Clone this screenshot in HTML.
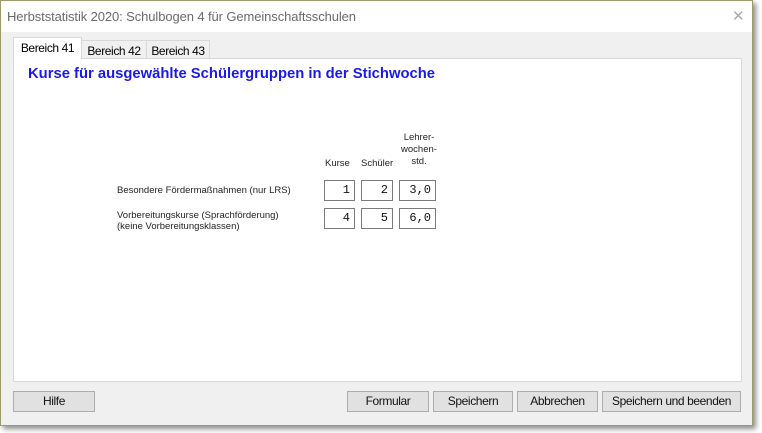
<!DOCTYPE html>
<html><head><meta charset="utf-8"><style>
body{margin:0;width:762px;height:433px;background:#fff;position:relative;overflow:hidden;font-family:"Liberation Sans",sans-serif;}
.win{position:absolute;left:0;top:0;width:753px;height:426px;background:#f0f0f0;border:1px solid #9a9a6a;box-shadow:3px 3px 5px rgba(0,0,0,.45);box-sizing:border-box;}
.title{position:absolute;left:0;top:0;right:0;height:31px;background:#fff;}
.t{position:absolute;left:6px;top:8px;font-size:13px;color:#6a6a6a;letter-spacing:-0.1px;}
.x{position:absolute;left:731px;top:6px;font-size:15px;color:#aaa;}
.abs{position:absolute;}
.tab{position:absolute;font-size:12px;color:#000;border:1px solid #d8d8d8;box-sizing:border-box;text-align:center;background:#f0f0f0;padding-top:3px;letter-spacing:-0.4px;}
.panel{position:absolute;left:12px;top:57px;width:729px;height:324px;background:#fff;border:1px solid #d8d8d8;box-sizing:border-box;}
.s{font-size:9.5px;color:#222;position:absolute;}
.in{position:absolute;height:21px;border:1px solid #7a7a7a;background:#fff;box-sizing:border-box;font-family:"Liberation Mono",monospace;font-size:12px;text-align:right;padding-right:4px;line-height:19px;color:#111;}
.btn{position:absolute;top:390px;height:21px;background:#e1e1e1;border:1px solid #adadad;box-sizing:border-box;font-size:12px;text-align:center;line-height:19px;color:#111;letter-spacing:-0.4px;}
</style></head><body>
<div class="win">
<div class="title"><div class="t">Herbststatistik 2020: Schulbogen 4 für Gemeinschaftsschulen</div><div class="x">✕</div></div>
<div class="panel"></div>
<div class="tab" style="left:80px;top:39px;width:66px;height:19px;">Bereich 42</div>
<div class="tab" style="left:145px;top:39px;width:64px;height:19px;">Bereich 43</div>
<div class="tab" style="left:12px;top:36px;width:69px;height:22px;background:#fff;border-bottom:none;padding-top:3px;">Bereich 41</div>
<div class="abs" style="left:27px;top:65px;font-size:14.8px;font-weight:bold;color:#1a1ae6;">Kurse für ausgewählte Schülergruppen in der Stichwoche</div>
<div class="s" style="left:324px;top:157px;">Kurse</div>
<div class="s" style="left:360px;top:157px;">Schüler</div>
<div class="s" style="left:400px;top:131px;text-align:center;width:36px;line-height:12px;">Lehrer-<br>wochen-<br>std.</div>
<div class="s" style="left:116px;top:184px;">Besondere Fördermaßnahmen (nur LRS)</div>
<div class="s" style="left:116px;top:209px;line-height:11px;">Vorbereitungskurse (Sprachförderung)<br>(keine Vorbereitungsklassen)</div>
<div class="in" style="left:323px;top:179px;width:31px;">1</div>
<div class="in" style="left:360px;top:179px;width:32px;">2</div>
<div class="in" style="left:398px;top:179px;width:37px;">3,0</div>
<div class="in" style="left:323px;top:207px;width:31px;">4</div>
<div class="in" style="left:360px;top:207px;width:32px;">5</div>
<div class="in" style="left:398px;top:207px;width:37px;">6,0</div>
<div class="btn" style="left:12px;width:82px;">Hilfe</div>
<div class="btn" style="left:346px;width:82px;">Formular</div>
<div class="btn" style="left:432px;width:80px;">Speichern</div>
<div class="btn" style="left:516px;width:81px;">Abbrechen</div>
<div class="btn" style="left:601px;width:139px;">Speichern und beenden</div>
</div>
</body></html>
